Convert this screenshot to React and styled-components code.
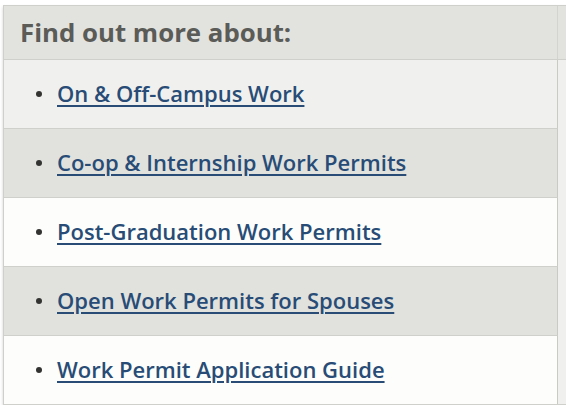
import React from 'react';
import styled, { createGlobalStyle } from 'styled-components';

const GlobalStyle = createGlobalStyle`
  html, body {
    margin: 0;
    padding: 0;
    background: #ffffff;
    font-family: "Open Sans", "Liberation Sans", sans-serif;
  }
`;

const LINKS = [
  { id: 1, label: 'On & Off-Campus Work', tone: 'light' },
  { id: 2, label: 'Co-op & Internship Work Permits', tone: 'dark' },
  { id: 3, label: 'Post-Graduation Work Permits', tone: 'white' },
  { id: 4, label: 'Open Work Permits for Spouses', tone: 'dark' },
  { id: 5, label: 'Work Permit Application Guide', tone: 'white' },
];

const TONES = {
  light: '#f0f1ef',
  dark: '#e1e2de',
  white: '#fdfefb',
};

const App = () => {
  return (
    <>
      <GlobalStyle />
      <Panel>
        <Header>
          <Title>Find out more about:</Title>
        </Header>
        <List>
          {LINKS.map(link => (
            <Row key={link.id} tone={link.tone}>
              <Bullet />
              <LinkText href="#">{link.label}</LinkText>
            </Row>
          ))}
        </List>
      </Panel>
    </>
  );
};

export default App;

const Panel = styled.section`
  margin: 5px 0 0 3px;
  width: 563px;
  border-top: 1px solid #cfcfcc;
  border-left: 1px solid #cfcfcc;
  border-bottom: 1px solid #cfcfcc;
  background-color: #f0f0ef;
  box-shadow: 0 2px 3px rgba(0, 0, 0, 0.18);
`;

const Header = styled.div`
  display: flex;
  background-color: #e2e3df;
  border-bottom: 1px solid #cfcfcc;
`;

const Title = styled.h2`
  box-sizing: border-box;
  width: 554px;
  height: 53px;
  margin: 0;
  padding: 0 0 1px 16px;
  display: flex;
  align-items: center;
  border-right: 1px solid #d3d4d0;
  color: #5b5b57;
  font-size: 25.8px;
  font-weight: 700;
`;

const List = styled.ul`
  margin: 0;
  padding: 0;
  list-style: none;
`;

const Row = styled.li`
  box-sizing: border-box;
  width: 554px;
  height: 69px;
  display: flex;
  align-items: center;
  gap: 15px;
  padding: 0 0 3px 32px;
  background-color: ${props => TONES[props.tone]};
  border-right: 1px solid #c9cac6;
  border-top: 1px solid #cfd0cc;

  &:first-child {
    border-top: none;
    height: 68px;
  }
`;

const Bullet = styled.span`
  flex: none;
  width: 6px;
  height: 6px;
  border-radius: 50%;
  background-color: #333331;
  margin-top: 3px;
`;

const LinkText = styled.a`
  color: #284c76;
  font-size: 22px;
  font-weight: 600;
  text-decoration: underline;
  text-decoration-thickness: 2px;
  text-underline-offset: 3px;
`;
